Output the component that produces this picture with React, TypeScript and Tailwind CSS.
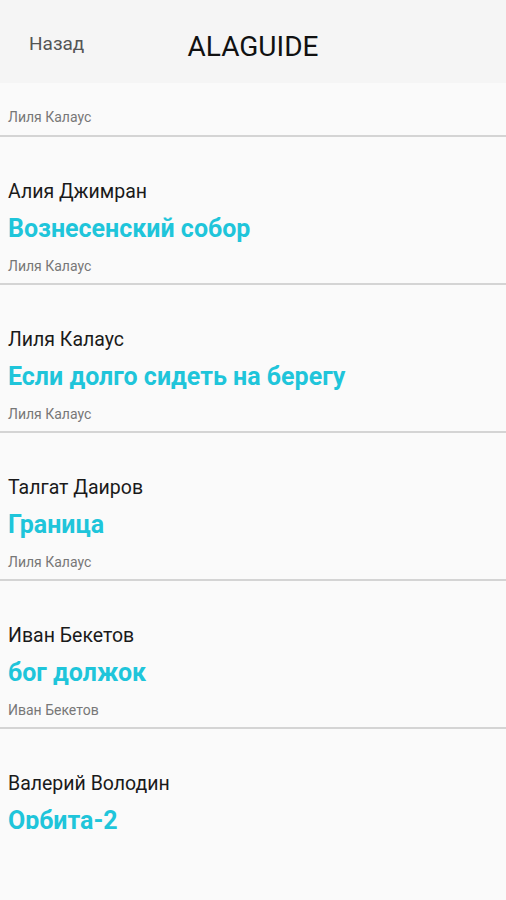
import React from "react";

const items = [
  { author: "Алия Джимран", title: "Вознесенский собор", sub: "Лиля Калаус" },
  { author: "Лиля Калаус", title: "Если долго сидеть на берегу", sub: "Лиля Калаус" },
  { author: "Талгат Даиров", title: "Граница", sub: "Лиля Калаус" },
  { author: "Иван Бекетов", title: "бог должок", sub: "Иван Бекетов" },
  { author: "Валерий Володин", title: "Орбита-2", sub: "Валерий Володин" },
];

export default function App() {
  return (
    <div
      className="w-[506px] h-[900px] bg-[#fafafa] overflow-hidden"
      style={{ fontFamily: "Roboto, 'Noto Sans', sans-serif" }}
    >
      <header className="h-[83px] bg-[#f5f5f5] grid grid-cols-[1fr_auto_1fr] items-start">
        <div className="pl-[29px] pt-[33px] text-[19px] leading-[22px] text-[#555555]">Назад</div>
        <div className="pt-[31px] text-[28px] leading-[32px] text-[#111111]">ALAGUIDE</div>
        <div />
      </header>
      <div className="h-[746px] overflow-hidden">
        <div className="px-[8px] pt-[26px] pb-[10px] border-b-2 border-[#d4d4d4]">
          <div className="text-[14px] leading-[16px] text-[#777777]">Лиля Калаус</div>
        </div>
        {items.map((it, i) => (
          <div key={i} className="px-[8px] pt-[44px] pb-[9px] border-b-2 border-[#d4d4d4] flex flex-col">
            <div className="text-[19.5px] leading-[22px] text-[#1a1a1a]">{it.author}</div>
            <div className="mt-[12px] text-[25px] leading-[28px] font-bold text-[#1fc5da]">{it.title}</div>
            <div className="mt-[15px] text-[14px] leading-[16px] text-[#777777]">{it.sub}</div>
          </div>
        ))}
      </div>
    </div>
  );
}
